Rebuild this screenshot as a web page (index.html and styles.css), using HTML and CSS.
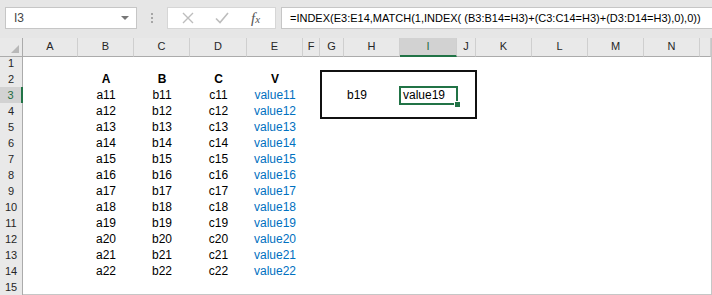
FILE: index.html
```html
<!DOCTYPE html>
<html lang="en">

<head>
    <meta charset="UTF-8">
    <title>INDEX MATCH across columns</title>
    <link rel="stylesheet" href="styles.css">
</head>

<body>
    <div class="formula-bar">
        <div class="name-box">
            <span>I3</span>
            <span class="drop"></span>
        </div>
        <div class="grip"><i></i><i></i><i></i></div>
        <div class="fx-buttons">
            <svg class="btn" width="12" height="12" viewBox="0 0 12 12">
                <path d="M1 1 L11 11 M11 1 L1 11" stroke="#bdbdbd" stroke-width="1.4" fill="none" />
            </svg>
            <svg class="btn" width="14" height="12" viewBox="0 0 14 12">
                <path d="M1 6.5 L5 10.5 L13 1" stroke="#bdbdbd" stroke-width="1.6" fill="none" />
            </svg>
            <span class="fx">f<small>x</small></span>
        </div>
        <div class="formula">=INDEX(E3:E14,MATCH(1,INDEX( (B3:B14=H3)+(C3:C14=H3)+(D3:D14=H3),0),0))</div>
    </div>

    <div class="sheet">
        <div class="row col-heads">
            <div class="corner"></div>
            <div>A</div><div>B</div><div>C</div><div>D</div><div>E</div><div>F</div><div>G</div>
            <div>H</div><div class="active">I</div><div>J</div><div>K</div><div>L</div><div>M</div><div>N</div>
            <div></div>
        </div>
        <div class="row"><div class="rh">1</div></div>
        <div class="row"><div class="rh">2</div><div></div><div class="c b">A</div><div class="c b">B</div><div class="c b">C</div><div class="c b">V</div></div>
        <div class="row"><div class="rh active">3</div><div></div><div class="c">a11</div><div class="c">b11</div><div class="c">c11</div><div class="c v">value11</div><div class="l in-h">b19</div><div class="l in-i sel">value19</div></div>
        <div class="row"><div class="rh">4</div><div></div><div class="c">a12</div><div class="c">b12</div><div class="c">c12</div><div class="c v">value12</div></div>
        <div class="row"><div class="rh">5</div><div></div><div class="c">a13</div><div class="c">b13</div><div class="c">c13</div><div class="c v">value13</div></div>
        <div class="row"><div class="rh">6</div><div></div><div class="c">a14</div><div class="c">b14</div><div class="c">c14</div><div class="c v">value14</div></div>
        <div class="row"><div class="rh">7</div><div></div><div class="c">a15</div><div class="c">b15</div><div class="c">c15</div><div class="c v">value15</div></div>
        <div class="row"><div class="rh">8</div><div></div><div class="c">a16</div><div class="c">b16</div><div class="c">c16</div><div class="c v">value16</div></div>
        <div class="row"><div class="rh">9</div><div></div><div class="c">a17</div><div class="c">b17</div><div class="c">c17</div><div class="c v">value17</div></div>
        <div class="row"><div class="rh">10</div><div></div><div class="c">a18</div><div class="c">b18</div><div class="c">c18</div><div class="c v">value18</div></div>
        <div class="row"><div class="rh">11</div><div></div><div class="c">a19</div><div class="c">b19</div><div class="c">c19</div><div class="c v">value19</div></div>
        <div class="row"><div class="rh">12</div><div></div><div class="c">a20</div><div class="c">b20</div><div class="c">c20</div><div class="c v">value20</div></div>
        <div class="row"><div class="rh">13</div><div></div><div class="c">a21</div><div class="c">b21</div><div class="c">c21</div><div class="c v">value21</div></div>
        <div class="row"><div class="rh">14</div><div></div><div class="c">a22</div><div class="c">b22</div><div class="c">c22</div><div class="c v">value22</div></div>
        <div class="row last"><div class="rh">15</div></div>

        <!-- rectangle shape drawn over G2:J4 -->
        <div class="shape"></div>
    </div>
</body>

</html>
```

FILE: styles.css
```css
body {
    margin: 0;
    font-family: "Liberation Sans", Arial, sans-serif;
    font-size: 12px;
    background: #ffffff;
    width: 712px;
    height: 295px;
    overflow: hidden;
}

/* formula bar */

.formula-bar {
    display: flex;
    align-items: flex-start;
    height: 38px;
    padding: 7px 0 0 5px;
    box-sizing: border-box;
    background: #e6e6e6;
}

.name-box {
    display: flex;
    flex-shrink: 0;
    align-items: center;
    justify-content: space-between;
    width: 132px;
    height: 22px;
    padding: 0 7px 0 8px;
    box-sizing: border-box;
    background: #ffffff;
    border: 1px solid #c6c6c6;
    color: #444444;
}

.drop {
    width: 0;
    height: 0;
    border-left: 4px solid transparent;
    border-right: 4px solid transparent;
    border-top: 4px solid #777777;
}

.grip {
    display: flex;
    flex-shrink: 0;
    flex-direction: column;
    align-items: center;
    gap: 2px;
    width: 30px;
    padding-top: 6px;
}

.grip i {
    width: 2px;
    height: 2px;
    background: #a6a6a6;
}

.fx-buttons {
    display: flex;
    flex-shrink: 0;
    align-items: center;
    width: 109px;
    height: 22px;
    box-sizing: border-box;
    padding-left: 14px;
    background: #ffffff;
    border: 1px solid #d6d6d6;
}

.fx-buttons .btn:first-child {
    margin-right: 21px;
}

.fx {
    margin-left: 22px;
    font-family: "Liberation Serif", "Times New Roman", serif;
    font-style: italic;
    font-size: 15px;
    color: #555555;
}

.fx small {
    font-size: 11px;
}

.formula {
    flex: 1;
    min-width: 0;
    height: 22px;
    margin-left: 5px;
    padding-left: 8px;
    box-sizing: border-box;
    font-size: 11px;
    line-height: 20px;
    background: #ffffff;
    border: 1px solid #c6c6c6;
    border-right: none;
    color: #000000;
    white-space: nowrap;
    overflow: hidden;
}

/* sheet grid */

.sheet {
    position: relative;
    width: 711px;
    border-right: 1px solid #c6c6c6;
}

.row {
    display: grid;
    grid-template-columns: 23px 55px 56px 56px 57px 56px 17px 24px 56px 57px 19px 56px 56px 56px 56px 1fr;
    height: 16px;
    box-sizing: border-box;
}

.row.last {
    border-bottom: 1px solid #c6c6c6;
}

.col-heads {
    height: 17px;
}

.col-heads div {
    background: #e9e9e9;
    border-right: 1px solid #cfcfcf;
    border-bottom: 1px solid #ababab;
    box-sizing: border-box;
    text-align: center;
    font-size: 11px;
    line-height: 17px;
    color: #262626;
}

.col-heads .active {
    background: #d2d2d2;
    border-bottom: 2px solid #217346;
    color: #1e6b41;
}

.col-heads .corner {
    position: relative;
    border-right: 1px solid #ababab;
}

.corner::after {
    content: "";
    position: absolute;
    right: 3px;
    bottom: 3px;
    border-style: solid;
    border-width: 0 0 8px 8px;
    border-color: transparent transparent #b8b8b8 transparent;
}

.rh {
    background: #e9e9e9;
    border-right: 1px solid #ababab;
    border-bottom: 1px solid #d4d4d4;
    box-sizing: border-box;
    text-align: center;
    font-size: 11px;
    line-height: 16px;
    color: #262626;
}

.rh.active {
    background: #d2d2d2;
    border-right: 2px solid #217346;
    color: #1e6b41;
}

.c {
    text-align: center;
    line-height: 16px;
    white-space: nowrap;
}

.l {
    padding-left: 3px;
    line-height: 16px;
    white-space: nowrap;
}

.b {
    font-weight: bold;
}

.v {
    color: #0070c0;
}

.in-h {
    grid-column: 9;
}

.in-i {
    grid-column: 10;
}

.sel {
    position: relative;
    outline: 2px solid #217346;
    outline-offset: -1px;
}

.sel::after {
    content: "";
    position: absolute;
    right: -3px;
    bottom: -3px;
    width: 5px;
    height: 5px;
    background: #217346;
    border: 1px solid #ffffff;
    border-width: 1px 0 0 1px;
}

.shape {
    position: absolute;
    left: 320px;
    top: 32px;
    width: 157px;
    height: 49px;
    box-sizing: border-box;
    border: 2px solid #111111;
    pointer-events: none;
}
```
